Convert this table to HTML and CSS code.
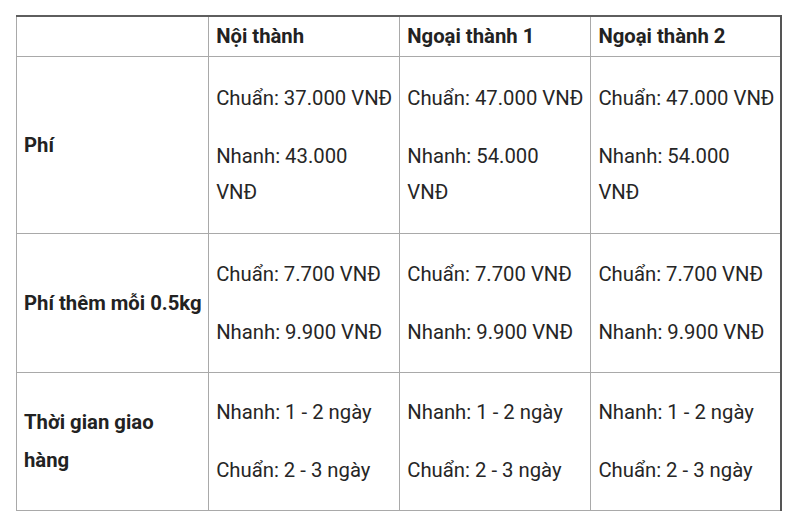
FILE: index.html
```html
<!DOCTYPE html>
<html lang="vi">
<head>
<meta charset="utf-8">
<link rel="stylesheet" href="styles.css">
</head>
<body>
<table class="fees">
  <colgroup>
    <col class="c1"><col class="c2"><col class="c3"><col class="c4">
  </colgroup>
  <tr class="r-head">
    <th></th>
    <th>Nội thành</th>
    <th>Ngoại thành 1</th>
    <th>Ngoại thành 2</th>
  </tr>
  <tr class="r-fee">
    <th>Phí</th>
    <td><p class="one-line">Chuẩn: 37.000 VNĐ</p><p>Nhanh: 43.000 VNĐ</p></td>
    <td><p class="one-line">Chuẩn: 47.000 VNĐ</p><p>Nhanh: 54.000 VNĐ</p></td>
    <td><p class="one-line">Chuẩn: 47.000 VNĐ</p><p>Nhanh: 54.000 VNĐ</p></td>
  </tr>
  <tr class="r-extra">
    <th class="one-line">Phí thêm mỗi 0.5kg</th>
    <td><p>Chuẩn: 7.700 VNĐ</p><p>Nhanh: 9.900 VNĐ</p></td>
    <td><p>Chuẩn: 7.700 VNĐ</p><p>Nhanh: 9.900 VNĐ</p></td>
    <td><p>Chuẩn: 7.700 VNĐ</p><p>Nhanh: 9.900 VNĐ</p></td>
  </tr>
  <tr class="r-time">
    <th>Thời gian giao hàng</th>
    <td><p>Nhanh: 1 - 2 ngày</p><p>Chuẩn: 2 - 3 ngày</p></td>
    <td><p>Nhanh: 1 - 2 ngày</p><p>Chuẩn: 2 - 3 ngày</p></td>
    <td><p>Nhanh: 1 - 2 ngày</p><p>Chuẩn: 2 - 3 ngày</p></td>
  </tr>
</table>
</body>
</html>
```

FILE: styles.css
```css
html, body {
  margin: 0;
  padding: 0;
  background: #ffffff;
}

body {
  padding: 15px 0 0 16px;
  font-family: Roboto, "Noto Sans", "Liberation Sans", sans-serif;
  font-size: 20.3px;
  color: #222222;
}

.fees {
  border-collapse: collapse;
  table-layout: fixed;
  width: 766px;
  border-top: 2px solid #5e5e5e;
  border-right: 2px solid #555555;
  border-left: 1px solid #9a9a9a;
  border-bottom: 1px solid #a8a8a8;
}

.c1 { width: 192px; }
.c2 { width: 191px; }
.c3 { width: 191px; }
.c4 { width: 190px; }

.fees th,
.fees td {
  border: 1px solid #a9a9a9;
  padding: 0 7px;
  text-align: left;
  vertical-align: middle;
  line-height: 36px;
  white-space: normal;
}

.fees th {
  font-weight: bold;
  color: #222222;
}

.fees td {
  font-weight: normal;
  color: #262626;
}

.r-fee td {
  padding-right: 9px;
}

.fees tr > *:first-child {
  line-height: 38px;
}

.fees p {
  margin: 0;
}

.fees p + p {
  margin-top: 22px;
}

.fees .one-line {
  white-space: nowrap;
}

.r-head { height: 40px; }
.r-fee { height: 177px; }
.r-extra { height: 139px; }
.r-time { height: 138px; }
```
